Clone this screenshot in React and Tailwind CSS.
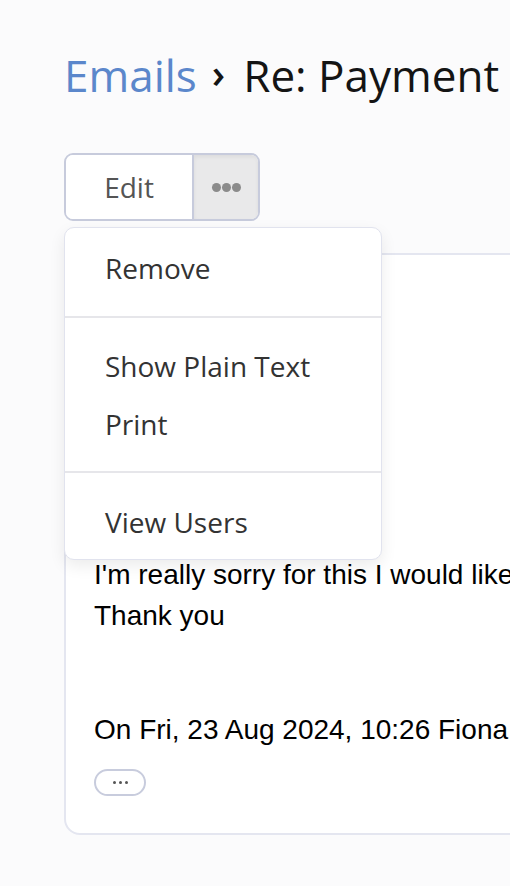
import React from "react";

function MenuItem({ children }) {
  return (
    <div className="h-[58px] flex items-center px-[40px] text-[28px] text-[#333333] whitespace-nowrap">
      {children}
    </div>
  );
}

function Divider() {
  return <div className="h-[2px] bg-[#e6e6ea]" />;
}

export default function App() {
  return (
    <div className="min-h-[886px] w-[510px] overflow-hidden bg-[#fbfbfc] pl-[64px] font-['Open_Sans',sans-serif]">
      <h1 className="pt-[47px] h-[103px] flex items-center whitespace-nowrap text-[44px] leading-[56px] text-[#141414]">
        <span className="text-[#5b87cb]">Emails</span>
        <span className="ml-[15px] mr-[18px] text-[40px] font-semibold -mt-[4px]">›</span>
        <span>Re: Payment</span>
      </h1>

      <div className="relative mt-[50px]">
        <div className="flex w-fit h-[68px] rounded-[9px] border-2 border-[#c7cbdc] overflow-hidden">
          <button className="w-[126px] bg-white text-[28px] text-[#555555] flex items-center justify-center">
            Edit
          </button>
          <button className="w-[66px] border-l-2 border-[#c7cbdc] bg-[#e9e9ea] shadow-[inset_0_2px_4px_rgba(0,0,0,0.06)] flex items-center justify-center gap-[1px]">
            <span className="w-[9px] h-[9px] rounded-full bg-[#8b8b8b]" />
            <span className="w-[9px] h-[9px] rounded-full bg-[#8b8b8b]" />
            <span className="w-[9px] h-[9px] rounded-full bg-[#8b8b8b]" />
          </button>
        </div>

        <div className="absolute left-0 top-[74px] z-10 w-[318px] rounded-[10px] border border-[#e1e3ee] bg-white shadow-[0_6px_16px_rgba(0,0,0,0.08)]">
          <div className="pt-[11px] pb-[19px]">
            <MenuItem>Remove</MenuItem>
          </div>
          <Divider />
          <div className="pt-[19px] pb-[18px]">
            <MenuItem>Show Plain Text</MenuItem>
            <MenuItem>Print</MenuItem>
          </div>
          <Divider />
          <div className="pt-[20px] pb-[8px]">
            <MenuItem>View Users</MenuItem>
          </div>
        </div>

        <div className="mt-[32px] w-[720px] rounded-[16px] border-2 border-[#e4e6f0] bg-white pl-[28px] pb-[37px] font-['Liberation_Sans',Arial,sans-serif] text-[28px] leading-[41px] text-black">
          <div className="h-[299px]" />
          <div className="whitespace-nowrap">
            <p>I'm really sorry for this I would like to make the payment now.</p>
            <p>Thank you</p>
            <p className="mt-[73px]">On Fri, 23 Aug 2024, 10:26 Fiona wrote:</p>
          </div>
          <button className="mt-[19px] w-[52px] h-[27px] rounded-full border-2 border-[#c8ccdd] bg-white flex items-center justify-center gap-[3px]">
            <span className="w-[3px] h-[3px] rounded-full bg-[#555]" />
            <span className="w-[3px] h-[3px] rounded-full bg-[#555]" />
            <span className="w-[3px] h-[3px] rounded-full bg-[#555]" />
          </button>
        </div>
      </div>
    </div>
  );
}
